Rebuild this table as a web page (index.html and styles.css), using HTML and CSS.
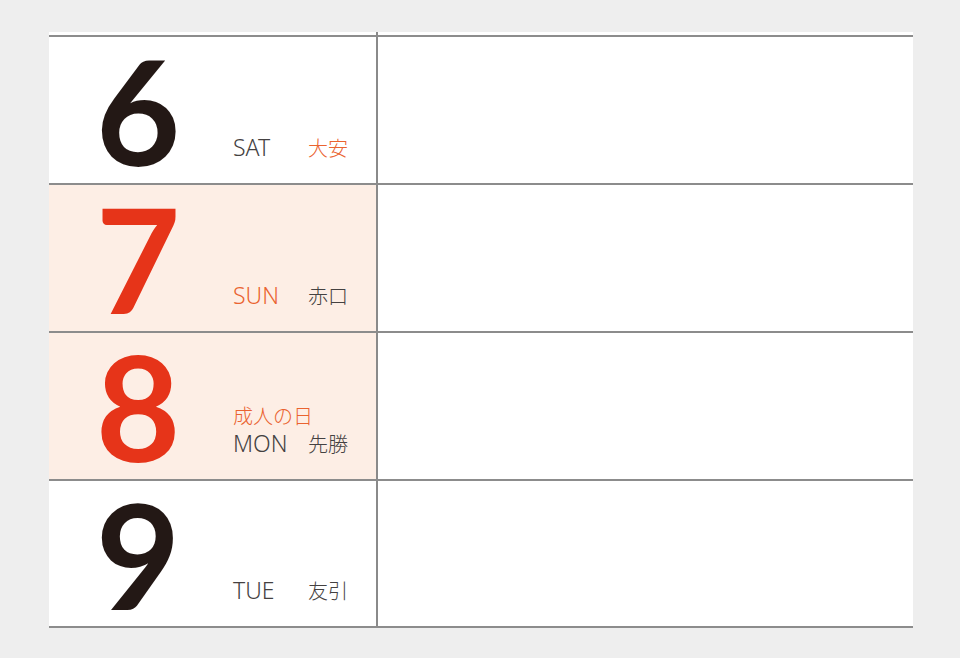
FILE: index.html
```html
<!DOCTYPE html>
<html lang="ja">
<head>
<meta charset="utf-8">
<link rel="stylesheet" href="styles.css">
</head>
<body>
<div class="panel">
  <div class="row">
    <div class="day">
      <div class="num num-black">6</div>
      <div class="labels">
        <div class="line"><span class="wd">SAT</span><span class="rk orange">大安</span></div>
      </div>
    </div>
    <div class="memo"></div>
  </div>
  <div class="row">
    <div class="day holiday">
      <div class="num num-red">7</div>
      <div class="labels">
        <div class="line"><span class="wd orange">SUN</span><span class="rk">赤口</span></div>
      </div>
    </div>
    <div class="memo"></div>
  </div>
  <div class="row">
    <div class="day holiday">
      <div class="num num-red">8</div>
      <div class="labels">
        <div class="hname orange">成人の日</div>
        <div class="line"><span class="wd">MON</span><span class="rk">先勝</span></div>
      </div>
    </div>
    <div class="memo"></div>
  </div>
  <div class="row last">
    <div class="day">
      <div class="num num-black">9</div>
      <div class="labels">
        <div class="line"><span class="wd">TUE</span><span class="rk">友引</span></div>
      </div>
    </div>
    <div class="memo"></div>
  </div>
</div>
</body>
</html>
```

FILE: styles.css
```css
html, body {
  margin: 0;
  padding: 0;
  background: #eeeeee;
}
body {
  font-family: "Noto Sans", "Noto Sans CJK JP", sans-serif;
}
.panel {
  margin: 32px 0 0 49px;
  width: 864px;
  padding-top: 3px;
  background:
    linear-gradient(to right, transparent 327px, #8a8a8a 327px, #8a8a8a 329px, transparent 329px),
    #ffffff;
  display: flex;
  flex-direction: column;
}
.row {
  height: 146px;
  border-top: 2px solid #8c8c8c;
  display: flex;
}
.row.last {
  border-bottom: 2px solid #8c8c8c;
  height: 145px;
}
.day {
  width: 327px;
  display: flex;
  align-items: stretch;
}
.day.holiday {
  background: #fdeee5;
}
.memo {
  flex: 1;
}
.num {
  width: 178px;
  height: 140px;
  align-self: center;
  text-align: center;
  font-family: Lato, "Noto Sans", sans-serif;
  font-weight: 700;
  font-size: 146px;
  line-height: 140px;
}
.num-black { color: #231815; }
.num-red { color: #e63419; }
.labels {
  margin-left: 6px;
  align-self: flex-end;
  padding-bottom: 23px;
  display: flex;
  flex-direction: column;
  color: #444141;
}
.line {
  display: flex;
  align-items: baseline;
  height: 26px;
  line-height: 26px;
}
.wd {
  width: 75px;
  font-family: "Noto Sans", sans-serif;
  font-weight: 300;
  font-size: 23px;
}
.rk, .hname {
  font-family: "Noto Sans CJK JP", sans-serif;
  font-weight: 300;
  font-size: 20px;
}
.hname {
  height: 28px;
  line-height: 28px;
}
.orange { color: #ea6330; }
```
